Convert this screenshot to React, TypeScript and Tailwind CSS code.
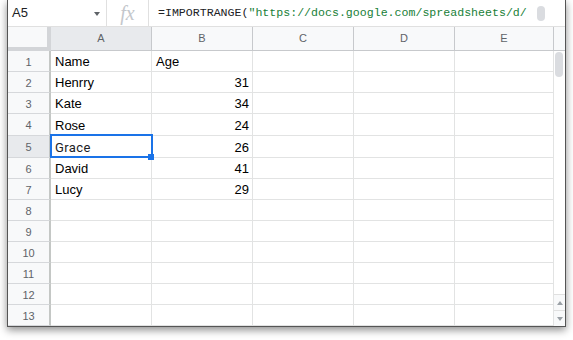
import React from 'react';

const rows: { name: string; age: string; h: number }[] = [
  { name: 'Name', age: 'Age', h: 21 },
  { name: 'Henrry', age: '31', h: 21 },
  { name: 'Kate', age: '34', h: 21 },
  { name: 'Rose', age: '24', h: 22 },
  { name: 'Grace', age: '26', h: 22 },
  { name: 'David', age: '41', h: 21 },
  { name: 'Lucy', age: '29', h: 21 },
  { name: '', age: '', h: 21 },
  { name: '', age: '', h: 21 },
  { name: '', age: '', h: 21 },
  { name: '', age: '', h: 21 },
  { name: '', age: '', h: 21 },
  { name: '', age: '', h: 21 },
];

const cols = ['A', 'B', 'C', 'D', 'E'];

function FormulaBar() {
  return (
    <div className="h-[27px] shrink-0 border-b border-[#e0e0e0] flex items-stretch">
      <div className="w-[98px] flex items-center justify-between pl-[4px] pr-[6px]">
        <span className="text-[13px] text-[#202124]">A5</span>
        <span className="w-0 h-0 border-x-[3.5px] border-x-transparent border-t-[4px] border-t-[#5f6368] mt-[2px]" />
      </div>
      <div className="w-[1px] bg-[#e0e0e0]" />
      <div className="w-[41px] flex items-center justify-center">
        <span className="font-['Liberation_Serif',serif] italic text-[20px] leading-none text-[#c4c7cc]">fx</span>
      </div>
      <div className="w-[1px] bg-[#e0e0e0]" />
      <div className="flex-1 flex items-center pl-[9px] overflow-hidden">
        <span className="flex-1 whitespace-nowrap overflow-hidden font-['Liberation_Mono',monospace] text-[11.6px] text-[#202124]">
          =IMPORTRANGE(<span className="text-[#188038]">"https://docs.google.com/spreadsheets/d/</span>
        </span>
        <span className="w-[8px] h-[15px] rounded-full bg-[#dadce0] mr-[20px] ml-[4px] shrink-0" />
      </div>
    </div>
  );
}

function HeaderRow() {
  return (
    <div className="h-[24px] flex shrink-0">
      <div className="w-[43px] bg-[#f8f9fa] border-r-[4px] border-b-[4px] border-[#d3d5d8]" />
      {cols.map((c) => (
        <div
          key={c}
          className={
            (c === 'A' ? 'bg-[#e8eaed] ' : 'bg-[#f8f9fa] ') +
            (c === 'E' ? 'w-[99px] ' : 'w-[101px] ') +
            'border-r border-b border-[#c7c9cc] flex items-center justify-center text-[11px] text-[#5f6368]'
          }
        >
          {c}
        </div>
      ))}
    </div>
  );
}

function Grid() {
  return (
    <div className="flex flex-col">
      {rows.map((r, i) => (
        <div key={i} className={(r.h === 22 ? 'h-[22px]' : 'h-[21px]') + ' flex shrink-0'}>
          <div
            className={
              (i === 4 ? 'bg-[#e8eaed] ' : 'bg-[#f8f9fa] ') +
              'w-[43px] border-r-2 border-r-[#c4c7c5] border-b border-b-[#d6d8db] flex items-center justify-center pt-[2px] text-[11px] text-[#5f6368]'
            }
          >
            {i + 1}
          </div>
          <div className="relative w-[101px] border-r border-b border-[#e2e3e3] flex items-center pt-[2px] pl-[4px] text-[13px] text-black">
            <span className={i === 4 ? "font-['Roboto',sans-serif] tracking-[0.4px] text-[#202124]" : ''}>{r.name}</span>
            {i === 4 && (
              <>
                <div className="absolute -left-[1px] -top-[2px] -right-[2px] -bottom-[1px] border-2 border-[#1a73e8] z-10" />
                <div className="absolute -right-[3px] -bottom-[3px] w-[6px] h-[6px] bg-[#1a73e8] z-20" />
              </>
            )}
          </div>
          <div
            className={
              (i === 0 ? 'justify-start pl-[4px] ' : 'justify-end pr-[3px] ') +
              'w-[101px] border-r border-b border-[#e2e3e3] flex items-center pt-[2px] text-[13px] text-black'
            }
          >
            {r.age}
          </div>
          <div className="w-[101px] border-r border-b border-[#e2e3e3]" />
          <div className="w-[101px] border-r border-b border-[#e2e3e3]" />
          <div className="w-[99px] border-r border-b border-[#e2e3e3]" />
        </div>
      ))}
    </div>
  );
}

function ScrollBar() {
  return (
    <div className="w-[11px] flex flex-col">
      <div className="h-[24px] shrink-0 bg-[#f8f9fa] border-b border-[#c7c9cc]" />
      <div className="flex-1 relative bg-white">
        <div className="absolute left-[1px] top-[1px] w-[8px] h-[25px] rounded-full bg-[#dadce0]" />
      </div>
      <div className="h-[16px] shrink-0 bg-[#f8f9fa] border-t border-[#e0e0e0] flex items-center justify-center">
        <span className="w-0 h-0 border-x-[3px] border-x-transparent border-b-[4px] border-b-[#9aa0a6]" />
      </div>
      <div className="h-[16px] shrink-0 bg-[#f8f9fa] border-t border-[#e0e0e0] flex items-center justify-center">
        <span className="w-0 h-0 border-x-[3px] border-x-transparent border-t-[4px] border-t-[#9aa0a6]" />
      </div>
    </div>
  );
}

export default function App() {
  return (
    <div className="w-[573px] h-[340px] bg-white font-['Liberation_Sans',Arial,sans-serif]">
      <div className="ml-[7px] w-[559px] h-[327px] border-x border-b border-[#555] bg-white shadow-[0_3px_8px_rgba(0,0,0,0.45)] flex flex-col overflow-hidden">
        <FormulaBar />
        <div className="flex flex-1 overflow-hidden">
          <div className="flex flex-col">
            <HeaderRow />
            <Grid />
          </div>
          <ScrollBar />
        </div>
      </div>
    </div>
  );
}
